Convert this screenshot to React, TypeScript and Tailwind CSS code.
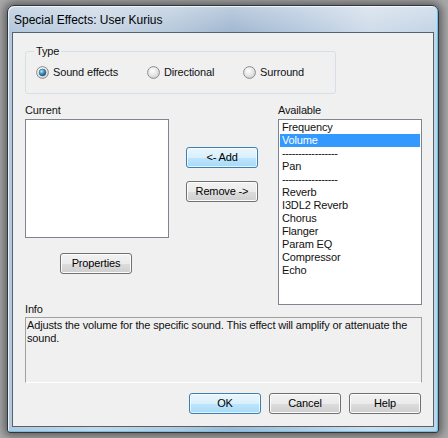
import type { ReactNode } from "react";

const font = { fontFamily: '"Liberation Sans", Arial, sans-serif' };

function Radio({ checked }: { checked?: boolean }) {
  return (
    <svg width="13" height="13" viewBox="0 0 13 13" className="shrink-0">
      <defs>
        <radialGradient id="rb" cx="40%" cy="35%" r="70%">
          <stop offset="0%" stopColor="#ffffff" />
          <stop offset="100%" stopColor="#d2d2d2" />
        </radialGradient>
        <radialGradient id="rd" cx="35%" cy="30%" r="75%">
          <stop offset="0%" stopColor="#b5ecff" />
          <stop offset="55%" stopColor="#3a8fbd" />
          <stop offset="100%" stopColor="#164d6e" />
        </radialGradient>
      </defs>
      <circle cx="6.5" cy="6.5" r="5.9" fill="url(#rb)" stroke="#8d8d8d" strokeWidth="1" />
      {checked && <circle cx="6.5" cy="6.5" r="3.4" fill="url(#rd)" stroke="#2b607f" strokeWidth="0.6" />}
    </svg>
  );
}

function Btn({ children, primary, className }: { children: ReactNode; primary?: boolean; className?: string }) {
  return (
    <div
      className={
        "flex h-[21px] w-[72px] items-center justify-center rounded-[3px] border text-[11px] text-black " +
        (primary
          ? "border-[#3c7fb1] bg-[linear-gradient(180deg,#eaf6fd_0%,#d9f0fc_50%,#bee6fd_51%,#a7d9f5_100%)] shadow-[inset_0_0_0_1px_rgba(255,255,255,0.7)] "
          : "border-[#707070] bg-[linear-gradient(180deg,#f2f2f2_0%,#ebebeb_50%,#dddddd_51%,#cfcfcf_100%)] shadow-[inset_0_0_0_1px_#fcfcfc] ") +
        (className ?? "")
      }
    >
      {children}
    </div>
  );
}

const available = [
  "Frequency",
  "Volume",
  "-----------------",
  "Pan",
  "-----------------",
  "Reverb",
  "I3DL2 Reverb",
  "Chorus",
  "Flanger",
  "Param EQ",
  "Compressor",
  "Echo",
];

export default function App() {
  return (
    <div className="h-[438px] w-[448px] overflow-hidden bg-[#a9a9a9] pl-[7px] pt-[5px]" style={font}>
      <div className="flex h-[428px] w-[432px] flex-col rounded-t-[7px] rounded-b-[3px] border border-[#30363d] bg-[linear-gradient(180deg,rgba(255,255,255,0.3)_0%,rgba(255,255,255,0)_6%),linear-gradient(90deg,#b3c7dc_0%,#c8d6e5_20%,#b7c9dc_38%,#a2b8d1_52%,#b6c9de_68%,#d0dcea_84%,#c3d4e5_100%)] shadow-[0_0_9px_3px_rgba(0,0,0,0.45),inset_-1px_-1px_0_#66c4ec,inset_1px_1px_0_rgba(255,255,255,0.75)]">
        {/* title bar */}
        <div className="flex h-[26px] items-center pl-[6px] pt-[1px] text-[12px] text-black">
          Special Effects: User Kurius
        </div>

        {/* client area */}
        <div className="mx-[4px] flex h-[395px] flex-col border border-[#56626e] bg-[#f0f0f0] pl-[12px] pr-[11px] text-[11px] leading-[13px] tracking-[-0.15px] text-[#111]">
          <fieldset className="mt-[12px] w-[311px] rounded-[3px] border border-[#d5dfe5] px-[8px] pb-[14px]">
            <legend className="px-[2px]">Type</legend>
            <div className="mt-[8px] flex items-center pl-[2px]">
              <div className="flex w-[111px] items-center gap-[4px]">
                <Radio checked />
                <span>Sound effects</span>
              </div>
              <div className="flex w-[96px] items-center gap-[4px]">
                <Radio />
                <span>Directional</span>
              </div>
              <div className="flex items-center gap-[4px]">
                <Radio />
                <span>Surround</span>
              </div>
            </div>
          </fieldset>

          <div className="mt-[10px] flex items-start">
            <div className="flex w-[144px] flex-col">
              <div>Current</div>
              <div className="mt-[2px] h-[119px] border border-[#7f8590] bg-white" />
              <Btn className="ml-[35px] mt-[15px]">Properties</Btn>
            </div>

            <div className="ml-[17px] mt-[43px] flex flex-col gap-[13px]">
              <Btn primary>&lt;- Add</Btn>
              <Btn>Remove -&gt;</Btn>
            </div>

            <div className="ml-[20px] flex w-[144px] flex-col">
              <div>Available</div>
              <div className="mt-[2px] h-[186px] border border-[#7f8590] bg-white px-[1px] pt-[1px]">
                {available.map((item, i) => (
                  <div
                    key={i}
                    className={
                      "h-[13px] pl-[2px] " +
                      (item === "Volume" ? "bg-[#3399ff] text-white " : "") +
                      (item.startsWith("-") ? "tracking-[-0.4px]" : "")
                    }
                  >
                    {item}
                  </div>
                ))}
              </div>
            </div>
          </div>

          <div className="-mt-[2px]">Info</div>
          <div className="mt-[1px] h-[66px] border border-[#a0a0a0] border-b-white pl-[1px] pt-[1px]">
            Adjusts the volume for the specific sound. This effect will amplify or attenuate the sound.
          </div>

          <div className="mt-[10px] flex justify-end gap-[8px] pr-[1px]">
            <Btn primary>OK</Btn>
            <Btn>Cancel</Btn>
            <Btn>Help</Btn>
          </div>
        </div>
      </div>
    </div>
  );
}
